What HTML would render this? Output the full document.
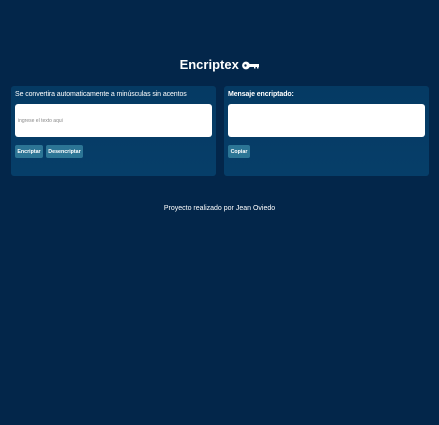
<!DOCTYPE html>
<html><head><style>
body{margin:0;width:439px;height:425px;background:#03264a;font-family:"Liberation Sans",sans-serif;color:#fff;position:relative;overflow:hidden}
.t{position:absolute;left:0;width:439px;top:57px;text-align:center;font-size:13px;font-weight:bold}
.p{position:absolute;top:86px;width:205px;height:90px;background:linear-gradient(#053a63,#063e69);border-radius:3px}
.l{font-size:7px;position:absolute;left:4px;top:5px;white-space:nowrap;letter-spacing:-0.1px}
.ta{position:absolute;left:4px;top:18px;width:197px;height:33px;background:#fff;border-radius:3px}
.ph{position:absolute;left:3px;top:14px;font-size:5px;color:#888}
.b{position:absolute;top:59px;height:13px;background:#2c7595;border-radius:2px;font-size:5.3px;font-weight:bold;line-height:14px;text-align:center}
.f{position:absolute;left:0;width:439px;top:205px;text-align:center;font-size:7px}
</style></head><body>
<div class="t">Encriptex <svg width="17" height="9" viewBox="0 0 17 9" style="vertical-align:-1px"><circle cx="4" cy="4.5" r="3.9" fill="#fff"/><circle cx="3.5" cy="4.5" r="1.2" fill="#03264a"/><rect x="7" y="3" width="10" height="3" fill="#fff"/><rect x="12" y="5" width="1.5" height="2.5" fill="#fff"/><rect x="15" y="5" width="1.5" height="2.5" fill="#fff"/></svg></div>
<div class="p" style="left:11px">
<div class="l">Se convertira automaticamente a minúsculas sin acentos</div>
<div class="ta"><div class="ph">ingrese el texto aqui</div></div>
<div class="b" style="left:4px;width:28px">Encriptar</div>
<div class="b" style="left:35px;width:37px">Desencriptar</div>
</div>
<div class="p" style="left:224px">
<div class="l" style="font-weight:bold">Mensaje encriptado:</div>
<div class="ta"></div>
<div class="b" style="left:4px;width:22px">Copiar</div>
</div>
<div class="f">Proyecto realizado por Jean Oviedo</div>
</body></html>
